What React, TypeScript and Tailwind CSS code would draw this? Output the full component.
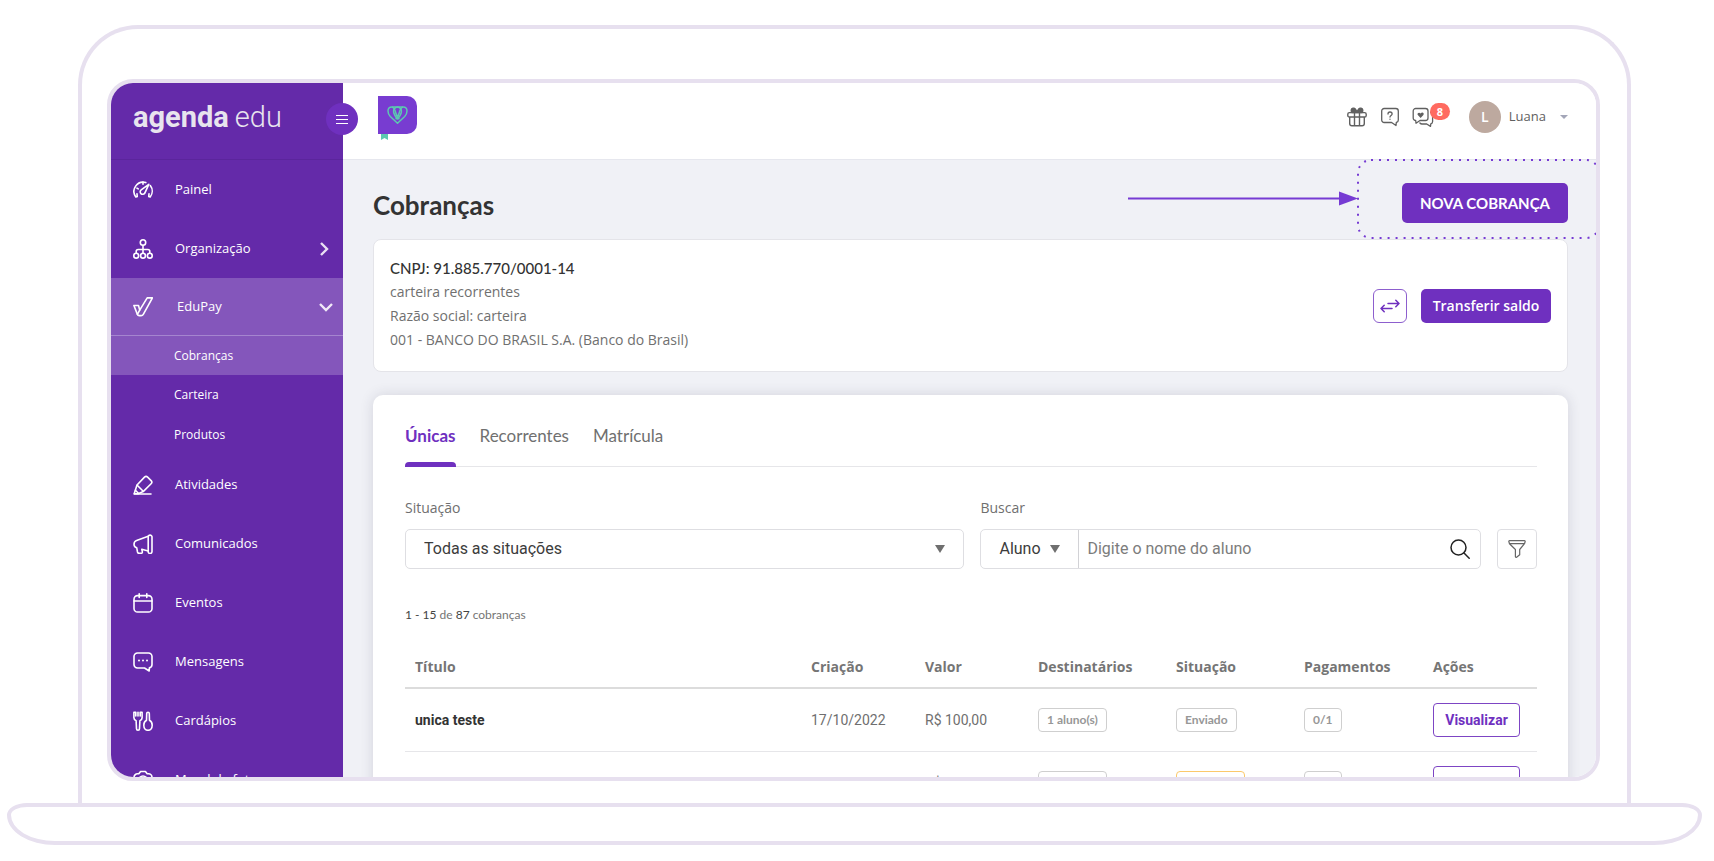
import type { ReactNode } from "react";

type NavItem = {
  label: string;
  icon: ReactNode;
};

type Charge = {
  id: number;
  title: string;
  created: string;
  value: string;
  recipients: string;
  status: string;
  statusType: "sent" | "pending";
  payments: string;
};

const charges: Charge[] = [
  {
    id: 1,
    title: "unica teste",
    created: "17/10/2022",
    value: "R$ 100,00",
    recipients: "1 aluno(s)",
    status: "Enviado",
    statusType: "sent",
    payments: "0/1",
  },
  {
    id: 2,
    title: "unica",
    created: "17/10/2022",
    value: "R$ 100,00",
    recipients: "1 aluno(s)",
    status: "Pendente",
    statusType: "pending",
    payments: "0/1",
  },
];

const Icon = ({ children }: { children: ReactNode }) => (
  <svg
    viewBox="0 0 20 20"
    className="w-5 h-5 shrink-0"
    fill="none"
    stroke="currentColor"
    strokeWidth="1.6"
    strokeLinecap="round"
    strokeLinejoin="round"
    aria-hidden="true"
  >
    {children}
  </svg>
);

const topItems: NavItem[] = [
  {
    label: "Painel",
    icon: (
      <Icon>
        <path d="M4.200 16.400 2.800 16.900A9.200 9.200 0 0 1 12.800 2.600M17.300 5.600a9.200 9.200 0 0 1-.1 11.300l-1.400-.5" />
        <path d="M15.800 4.300 8.200 9.800a2.500 2.500 0 1 0 3.500 3.500l4.100-9Z" />
        <path d="m4 13.800.2 2.600M16 13.800l-.2 2.600M4 8.200l1.300.7M10 2v2.300" />
      </Icon>
    ),
  },
];

const bottomItems: NavItem[] = [
  {
    label: "Atividades",
    icon: (
      <Icon>
        <path d="m4 10 7.500-7.900a2.200 2.200 0 0 1 3.100 0l3.500 3.500a2.200 2.200 0 0 1 0 3.100l-7.900 7.900-5 2.100H1.200L4 10Z" />
        <path d="m4.200 10.200 6 6M2.400 15.200l3 3M1.200 19H18" />
      </Icon>
    ),
  },
  {
    label: "Comunicados",
    icon: (
      <Icon>
        <path d="M15.200 2.300a2 2 0 0 1 3.800.4v14.600a1.900 1.900 0 0 1-3.800.5V2.300Z" />
        <path d="M15.200 2.300 3.600 6.500C1.900 7.100 1 8.500 1 10.200c0 1.700 1 3 2.700 3.500l.8 4.300c.2.900.8 1.300 1.600 1.300h2c1 0 1.400-.7 1.200-1.600l-.5-2.400 6.400 1.700" />
      </Icon>
    ),
  },
  {
    label: "Eventos",
    icon: (
      <Icon>
        <rect x="1" y="2.600" width="18" height="16.400" rx="3.600" />
        <path d="M1 8h18M6.200.8v3.600M13.800.8v3.600" />
      </Icon>
    ),
  },
  {
    label: "Mensagens",
    icon: (
      <Icon>
        <path d="M4.500 1h11A3.500 3.500 0 0 1 19 4.500v8c0 1.700-1 3-2.600 3.400L16.200 19l-4.700-3h-7A3.500 3.500 0 0 1 1 12.500v-8A3.500 3.500 0 0 1 4.500 1Z" />
        <path strokeWidth="2" d="M6 8.500h.01M10 8.500h.01M14 8.500h.01" />
      </Icon>
    ),
  },
  {
    label: "Cardápios",
    icon: (
      <Icon>
        <path d="M.9 1.200v5.600c0 1.500.8 2.400 2.200 3l.4 7.900a1.500 1.500 0 0 0 3 0l.4-7.900c1.400-.6 2.200-1.500 2.200-3V1.200H7.200V5M.9 1.200h1.900V5M5 1.200V5" />
        <path d="M13.500 9.300 13.700 2.600a1.300 1.300 0 0 1 2.600 0l.2 6.700c1.600.9 2.700 2.900 2.700 5 0 2.900-1.800 5-4.200 5s-4.200-2.100-4.200-5c0-2.100 1.100-4.100 2.700-5Z" />
      </Icon>
    ),
  },
  {
    label: "Mural de fotos",
    icon: (
      <Icon>
        <path d="M4.500 3.800h1.300L7.600 1.500h4.800l1.800 2.300h1.300A3.500 3.500 0 0 1 19 7.300v8a3.500 3.500 0 0 1-3.500 3.500h-11A3.500 3.500 0 0 1 1 15.300v-8a3.500 3.500 0 0 1 3.500-3.500Z" />
        <circle cx="10" cy="10.500" r="4.500" />
      </Icon>
    ),
  },
];

function NavLink({ item, children }: { item: NavItem; children?: ReactNode }) {
  return (
    <a href="#" className="h-[59px] pl-[22px] pr-3 flex items-center text-[13px]">
      {item.icon}
      <span className="ml-[22px] flex-1 whitespace-nowrap">{item.label}</span>
      {children}
    </a>
  );
}

function Sidebar() {
  return (
    <aside className="w-[232px] shrink-0 bg-[#642aa9] text-white">
      <div className="h-[77px] pl-[22px] pt-[10px] border-b border-[#5b259c] text-[#e8e4ee] text-[29px] leading-[48px] font-[Roboto,sans-serif] whitespace-nowrap">
        <strong>agenda</strong>
        <span className="ml-[6px] font-light">edu</span>
      </div>

      <nav>
        {topItems.map((item) => (
          <NavLink key={item.label} item={item} />
        ))}

        <NavLink
          item={{
            label: "Organização",
            icon: (
              <Icon>
                <circle cx="10" cy="3.500" r="2.700" />
                <circle cx="3.200" cy="16.700" r="2.400" />
                <circle cx="10" cy="16.700" r="2.400" />
                <circle cx="16.800" cy="16.700" r="2.400" />
                <path d="M10 6.200v8M3.200 14.200v-1.700c0-1.200.8-2 2-2h9.600c1.200 0 2 .8 2 2v1.700" />
              </Icon>
            ),
          }}
        >
          <svg viewBox="0 0 14 14" className="w-[14px] h-[14px]" fill="none" stroke="#e9e0f3" strokeWidth="2.400" aria-hidden="true">
            <path d="m4 1 6 6-6 6" />
          </svg>
        </NavLink>

        <a
          href="#"
          className="h-[58px] pl-[22px] pr-[10px] flex items-center text-[13px] bg-[#8456bb] border-b border-[#a585cf]"
        >
          <Icon>
            <path d="M.9 8.500h4.600l1.200 4.600L14.200.9h5.200L10.300 17.300a2.600 2.600 0 0 1-2.200 1.300H6.200a2 2 0 0 1-1.800-1.200L.9 8.500Z" />
            <path d="m4.400 17.400 2.300-4.300" />
          </Icon>
          <span className="ml-[24px] flex-1">EduPay</span>
          <svg viewBox="0 0 14 14" className="w-[14px] h-[14px]" fill="none" stroke="#f0e9f7" strokeWidth="2.400" aria-hidden="true">
            <path d="m1 4 6 6 6-6" />
          </svg>
        </a>
        <a href="#" className="h-[39px] pl-[63px] flex items-center text-xs bg-[#8456bb]">
          Cobranças
        </a>
        <a href="#" className="h-10 pl-[63px] flex items-center text-xs">
          Carteira
        </a>
        <a href="#" className="h-10 pl-[63px] flex items-center text-xs">
          Produtos
        </a>

        {bottomItems.map((item) => (
          <NavLink key={item.label} item={item} />
        ))}
      </nav>
    </aside>
  );
}

function Header() {
  return (
    <header className="relative h-[77px] shrink-0 pl-[35px] pr-7 flex items-start justify-between bg-white border-b border-[#e6e7ee]">
      <button
        aria-label="Menu"
        className="absolute -left-[17px] top-5 w-8 h-8 rounded-full bg-[#6f30bf] flex items-center justify-center"
      >
        <svg viewBox="0 0 12 10" className="w-3 h-[10px]" stroke="#fff" strokeWidth="1" aria-hidden="true">
          <path d="M0 1.500h12M0 5.500h12M0 9.500h12" />
        </svg>
      </button>

      <svg viewBox="0 0 39 44" className="w-[39px] h-11 mt-[13px]" aria-label="Escola">
        <path fill="#783cd1" d="M0 0h29a10 10 0 0 1 10 10v18a10 10 0 0 1-10 10H0Z" />
        <path fill="#5cc9b0" d="M3 38h7v6l-3.500-2L3 44Z" />
        <g fill="none" stroke="#5cc9b0" strokeWidth="1.500" strokeLinejoin="round">
          <path d="M19.500 27.300 12.300 20.500C10.800 18.900 10 17 10 15c0-2.400 1.500-4 3.900-4h11.200c2.400 0 3.900 1.600 3.900 4 0 2-.8 3.900-2.300 5.500L19.500 27.300Z" />
          <path d="M13.900 11c2.600.5 3.300 3.500 3.900 6 .5 2.200 1.500 4.200 3.500 6.300M25.100 11c-2.600.5-3.300 3.500-3.900 6-.5 2.200-1.500 4.200-3.500 6.300" />
          <path d="M19.500 11c-2.900.6-4.200 2.600-3.900 5.200.3 2.300 1.800 4.400 3.900 6.800 2.100-2.400 3.600-4.500 3.900-6.800.3-2.600-1-4.600-3.900-5.200Z" />
        </g>
      </svg>

      <div className="mt-[18px] h-8 flex items-center text-[#606060]">
        <button aria-label="Novidades" className="w-5 h-5">
          <svg viewBox="0 0 20 20" className="w-5 h-5" fill="none" stroke="currentColor" strokeWidth="1.400" strokeLinejoin="round" aria-hidden="true">
            <rect x=".8" y="5.600" width="18.400" height="4.400" rx="1.600" />
            <path d="M2.700 10v6.500c0 1.300.8 2.200 2.200 2.200h10.200c1.400 0 2.200-.9 2.200-2.200V10M7.500 5.600v13M12.500 5.600v13" />
            <path fill="currentColor" d="M10 4.600 8.200 1.900C7.300.6 4.500 1 4.200 3c-.1 1 .3 2 1 2.600h9.600c.7-.6 1.100-1.600 1-2.600-.3-2-3.100-2.400-4-1.100L10 4.600Z" />
          </svg>
        </button>
        <button aria-label="Ajuda" className="ml-[13px] w-5 h-5">
          <svg viewBox="0 0 20 20" className="w-5 h-5" fill="none" stroke="currentColor" strokeWidth="1.300" strokeLinecap="round" strokeLinejoin="round" aria-hidden="true">
            <path d="M4.200 1.500h11.600a2.500 2.500 0 0 1 2.500 2.500v9a2.500 2.500 0 0 1-2 2.500l-.3 3-4.400-3H4.200A2.500 2.500 0 0 1 1.700 13V4a2.500 2.500 0 0 1 2.500-2.500Z" />
            <path d="M8 7c0-1.200.8-2 2-2s2.100.8 2.100 1.900c0 1.500-2.100 1.600-2.100 3.200M10 12.200v.1" />
          </svg>
        </button>
        <button aria-label="Conversas, 8 novas" className="relative ml-3 w-[22px] h-5">
          <svg viewBox="0 0 22 20" className="w-[22px] h-5" fill="none" stroke="currentColor" strokeWidth="1.300" strokeLinecap="round" strokeLinejoin="round" aria-hidden="true">
            <path d="M4 1.500h9.500A2.500 2.500 0 0 1 16 4v7a2.500 2.500 0 0 1-2.500 2.500H8l-4 2.700-.3-2.700A2.500 2.500 0 0 1 1.200 11V4A2.500 2.500 0 0 1 4 1.500Z" />
            <path d="M18.600 5.500c1.300.3 2 1.200 2 2.500v6.500c0 1.200-.7 2.100-1.800 2.400l-.3 2.500-3.800-2.400H10c-.9 0-1.600-.4-2.100-1" />
            <path fill="currentColor" stroke="none" d="M8.600 11 5.800 8.100C4.600 6.600 6.900 4.500 8.600 6.400c1.700-1.900 4-.2 2.800 1.700L8.600 11Z" />
          </svg>
          <span className="absolute left-[18px] -top-1 w-5 h-[17px] rounded-full bg-[#ff6a60] text-white text-[11px] leading-[17px] font-bold">
            8
          </span>
        </button>
        <button className="ml-[35px] flex items-center text-[13px] font-medium">
          <span className="w-8 h-8 rounded-full bg-[#bda99f] text-white text-sm font-semibold flex items-center justify-center">
            L
          </span>
          <span className="ml-2">Luana</span>
          <svg viewBox="0 0 8 4" className="w-2 h-1 ml-[14px]" fill="#a3a6b8" aria-hidden="true">
            <path d="M0 0h8L4 4Z" />
          </svg>
        </button>
      </div>
    </header>
  );
}

const Caret = () => (
  <svg viewBox="0 0 10 8" className="w-[10px] h-2" fill="#6f6f6f" aria-hidden="true">
    <path d="M0 0h10L5 8Z" />
  </svg>
);

function Filters() {
  return (
    <div className="mt-[31px] grid grid-cols-[minmax(0,560fr)_minmax(0,501fr)_40px] gap-x-4 items-end text-sm leading-5 text-[#6f6f6f]">
      <div>
        <label htmlFor="situacao" className="block mb-[11px]">
          Situação
        </label>
        <div className="relative">
          <select
            id="situacao"
            className="block w-full h-10 pl-[18px] pr-10 appearance-none rounded-[5px] border border-[#dedee2] bg-white font-[Roboto,sans-serif] text-base text-[#3c3c3c]"
          >
            <option>Todas as situações</option>
          </select>
          <span className="absolute right-[19px] top-0 h-10 flex items-center pointer-events-none">
            <Caret />
          </span>
        </div>
      </div>

      <div>
        <label htmlFor="buscar" className="block mb-[11px]">
          Buscar
        </label>
        <div className="h-10 flex rounded-[5px] border border-[#dedee2] bg-white font-[Roboto,sans-serif] text-base">
          <div className="relative w-[98px] shrink-0 border-r border-[#d2d2d6]">
            <select
              aria-label="Buscar por"
              className="w-full h-full pl-[18px] appearance-none text-[#3c3c3c]"
            >
              <option>Aluno</option>
            </select>
            <span className="absolute right-[18px] top-0 h-full flex items-center pointer-events-none">
              <Caret />
            </span>
          </div>
          <input
            id="buscar"
            type="text"
            placeholder="Digite o nome do aluno"
            className="flex-1 min-w-0 px-2 outline-none placeholder:text-[#7c7c7c]"
          />
          <button aria-label="Pesquisar" className="px-[10px] text-[#222]">
            <svg viewBox="0 0 20 20" className="w-5 h-5" fill="none" stroke="currentColor" strokeWidth="1.500" strokeLinecap="round" aria-hidden="true">
              <circle cx="8.500" cy="8.500" r="7.500" />
              <path d="m14 14 5.200 5.200" />
            </svg>
          </button>
        </div>
      </div>

      <button
        aria-label="Filtrar"
        className="h-10 rounded-[4px] border border-[#dedee2] flex items-center justify-center text-[#666]"
      >
        <svg viewBox="0 0 18 18" className="w-[18px] h-[18px]" fill="none" stroke="currentColor" strokeWidth="1.200" strokeLinejoin="round" aria-hidden="true">
          <path d="M1.600.7h14.800c.7 0 .9.600.7 1.100l-.6 1.900-4.800 5.800v5.300l-3.100 2.500a.8.800 0 0 1-1.200-.7V9.500L1.500 3.700.9 1.800C.7 1.300.9.700 1.600.7ZM1.500 3.700h15" />
        </svg>
      </button>
    </div>
  );
}

function ChargesTable() {
  return (
    <table className="w-full mt-[22px] table-fixed border-collapse text-sm text-left text-[#6f6f6f]">
      <thead>
        <tr className="h-[41px] border-b-2 border-[#dcdcdc] text-[#757575]">
          <th className="pl-[10px]">Título</th>
          <th className="w-[114px] pl-[10px]">Criação</th>
          <th className="w-[113px] pl-[10px]">Valor</th>
          <th className="w-[138px] pl-[10px]">Destinatários</th>
          <th className="w-[128px] pl-[10px]">Situação</th>
          <th className="w-[129px] pl-[10px]">Pagamentos</th>
          <th className="w-[114px] pl-[10px]">Ações</th>
        </tr>
      </thead>
      <tbody className="font-[Roboto,sans-serif]">
        {charges.map((charge) => (
          <tr key={charge.id} className="h-[63px] border-b border-[#e6e6e9]">
            <td className="pl-[10px] font-bold text-[#333]">{charge.title}</td>
            <td className="pl-[10px]">{charge.created}</td>
            <td className="pl-[10px]">{charge.value}</td>
            <td className="pl-[10px]">
              <Pill>{charge.recipients}</Pill>
            </td>
            <td className="pl-[10px]">
              <Pill pending={charge.statusType === "pending"}>{charge.status}</Pill>
            </td>
            <td className="pl-[10px]">
              <Pill>{charge.payments}</Pill>
            </td>
            <td className="pl-[10px]">
              <button className="block w-[87px] h-[34px] rounded-[4px] border border-[#7d45c4] text-[#6f30bf] font-bold">
                Visualizar
              </button>
            </td>
          </tr>
        ))}
      </tbody>
    </table>
  );
}

function Pill({ children, pending }: { children: ReactNode; pending?: boolean }) {
  return (
    <span
      className={`inline-block h-6 px-2 rounded-[4px] border text-xs leading-[22px] font-bold align-middle font-[Lato,sans-serif] ${
        pending ? "border-[#fbc96b] text-[#f5a623]" : "border-[#cfcfcf] text-[#979797]"
      }`}
    >
      {children}
    </span>
  );
}

function Page() {
  return (
    <div className="relative flex-1 pl-[30px] pr-7 pt-[23px] bg-[#f0f1f6]">
      {/* callout around the main action */}
      <svg width="472" height="80" viewBox="0 0 472 80" className="absolute right-0 -top-px pointer-events-none" aria-hidden="true">
        <path d="M4 39.500h212" stroke="#763bd3" strokeWidth="2" />
        <path d="M215 32.500 234 39.500 215 46.500Z" fill="#763bd3" />
        <rect x="234" y="1" width="241" height="78" rx="13" fill="none" stroke="#763bd3" strokeWidth="2" strokeDasharray="2 6" />
      </svg>

      <div className="h-10 flex items-center justify-between">
        <h1 className="pt-1 font-[Lato,sans-serif] text-[26px] leading-8 font-bold text-[#333]">Cobranças</h1>
        <button className="h-10 px-[18px] rounded-[5px] bg-[#6f30bf] text-white font-[Lato,sans-serif] font-bold text-[15px]">
          NOVA COBRANÇA
        </button>
      </div>

      <section className="mt-4 h-[133px] px-4 flex justify-between rounded-lg border border-[#e4e4e9] bg-white">
        <div className="pt-4 text-sm leading-6 text-[#707070]">
          <p className="font-[Lato,sans-serif] text-[15px] leading-6 font-medium text-[#333]">CNPJ: 91.885.770/0001-14</p>
          <p>carteira recorrentes</p>
          <p>Razão social: carteira</p>
          <p>001 - BANCO DO BRASIL S.A. (Banco do Brasil)</p>
        </div>
        <div className="flex items-center gap-[14px] text-[#6f30bf]">
          <button
            aria-label="Trocar carteira"
            className="w-[34px] h-[34px] rounded-[6px] border border-[#8d5fce] flex items-center justify-center"
          >
            <svg viewBox="0 0 20 14" className="w-5 h-[14px]" fill="none" stroke="currentColor" strokeWidth="1.500" strokeLinecap="round" strokeLinejoin="round" aria-hidden="true">
              <path d="M8 4.500h11M15.800 1.300 19 4.500l-3.200 3.200M12 9.500H1M4.200 6.300 1 9.500l3.200 3.200" />
            </svg>
          </button>
          <button className="w-[130px] h-[34px] rounded-[5px] bg-[#6f30bf] text-white text-sm font-semibold">
            Transferir saldo
          </button>
        </div>
      </section>

      <section className="mt-[23px] pl-8 pr-[31px] rounded-[10px] bg-white shadow-[0_0_14px_rgba(40,40,70,0.14)]">
        <div role="tablist" className="h-[72px] flex items-start gap-6 border-b border-[#e6e6e9] font-[Lato,sans-serif] text-[17px] leading-6 text-[#707070]">
          <button role="tab" aria-selected="true" className="relative h-[72px] pt-[29px] pb-[19px] font-bold text-[#6f30bf]">
            Únicas
            <span className="absolute inset-x-0 bottom-0 h-[5px] rounded-t-[4px] bg-[#6f30bf]" />
          </button>
          <button role="tab" aria-selected="false" className="pt-[29px]">
            Recorrentes
          </button>
          <button role="tab" aria-selected="false" className="pt-[29px]">
            Matrícula
          </button>
        </div>

        <Filters />

        <p className="mt-9 font-[Lato,sans-serif] text-xs leading-5 text-[#757575]">
          <span className="text-[#444]">1 - 15</span> de <span className="text-[#444]">87</span> cobranças
        </p>

        <ChargesTable />
      </section>
    </div>
  );
}

export default function App() {
  return (
    <main className="h-screen pl-[7px] pr-3 pt-[25px] pb-4 flex flex-col bg-white font-['Open_Sans','Noto_Sans',sans-serif]">
      {/* laptop lid */}
      <div className="flex-1 min-h-0 mx-[71px] pt-[50px] pl-[25px] pr-[27px] pb-[22px] flex rounded-t-[60px] border-4 border-b-0 border-[#e7e0ef]">
        <div className="flex-1 min-w-0 flex rounded-[26px] border-4 border-[#e7e0ef] overflow-hidden">
          <Sidebar />
          <div className="flex-1 min-w-0 flex flex-col">
            <Header />
            <Page />
          </div>
        </div>
      </div>

      {/* laptop base */}
      <div className="h-[42px] shrink-0 border-4 border-[#e7e0ef] rounded-[20px_20px_48px_48px/12px_12px_30px_30px]" />
    </main>
  );
}
